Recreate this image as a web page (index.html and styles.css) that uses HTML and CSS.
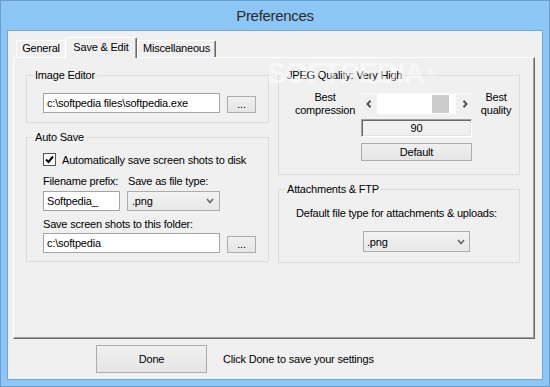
FILE: index.html
```html
<!DOCTYPE html>
<html lang="en">
<head>
    <meta charset="UTF-8">
    <title>Preferences</title>
    <link rel="stylesheet" href="styles.css">
</head>
<body>
    <div class="window">
        <div class="titlebar">Preferences</div>
        <div class="client">
            <div class="tabs">
                <div class="tab tab-general">General</div>
                <div class="tab tab-active">Save &amp; Edit</div>
                <div class="tab tab-misc">Miscellaneous</div>
            </div>
            <div class="panel">
                <div class="column column-left">
                    <div class="group group-editor">
                        <span class="group-title">Image Editor</span>
                        <div class="path-row">
                            <div class="textbox path">c:\softpedia files\softpedia.exe</div>
                            <button class="btn browse">...</button>
                        </div>
                    </div>
                    <div class="group group-autosave">
                        <span class="group-title">Auto Save</span>
                        <div class="check-row">
                            <span class="checkbox">
                                <svg width="11" height="11" viewBox="0 0 11 11"><polyline points="2,5.5 4.5,8 9,2.5" fill="none" stroke="#000" stroke-width="2"/></svg>
                            </span>
                            <span>Automatically save screen shots to disk</span>
                        </div>
                        <div class="field-labels">
                            <span class="label-prefix">Filename prefix:</span>
                            <span class="label-type">Save as file type:</span>
                        </div>
                        <div class="field-row">
                            <div class="textbox prefix">Softpedia_</div>
                            <div class="select type">
                                <span>.png</span>
                                <svg width="8" height="6" viewBox="0 0 8 6"><polyline points="1,1 4,4.5 7,1" fill="none" stroke="#666" stroke-width="1.6"/></svg>
                            </div>
                        </div>
                        <div class="folder-label">Save screen shots to this folder:</div>
                        <div class="path-row folder-row">
                            <div class="textbox path">c:\softpedia</div>
                            <button class="btn browse">...</button>
                        </div>
                    </div>
                </div>
                <div class="column column-right">
                    <div class="group group-jpeg">
                        <span class="group-title">JPEG Quality: Very High</span>
                        <div class="quality-row">
                            <div class="quality-label label-low">Best<br>compression</div>
                            <div class="quality-controls">
                                <div class="scroll">
                                    <span class="arrow">
                                        <svg width="6" height="8" viewBox="0 0 6 8"><polyline points="4.5,0.8 1.5,4 4.5,7.2" fill="none" stroke="#555" stroke-width="2"/></svg>
                                    </span>
                                    <span class="track"><span class="thumb"></span></span>
                                    <span class="arrow">
                                        <svg width="6" height="8" viewBox="0 0 6 8"><polyline points="1.5,0.8 4.5,4 1.5,7.2" fill="none" stroke="#555" stroke-width="2"/></svg>
                                    </span>
                                </div>
                                <div class="value">90</div>
                                <button class="btn default">Default</button>
                            </div>
                            <div class="quality-label label-high">Best<br>quality</div>
                        </div>
                    </div>
                    <div class="group group-ftp">
                        <span class="group-title">Attachments &amp; FTP</span>
                        <div class="ftp-label">Default file type for attachments &amp; uploads:</div>
                        <div class="select ftp-type">
                            <span>.png</span>
                            <svg width="8" height="6" viewBox="0 0 8 6"><polyline points="1,1 4,4.5 7,1" fill="none" stroke="#666" stroke-width="1.6"/></svg>
                        </div>
                    </div>
                </div>
            </div>
            <div class="footer">
                <button class="btn done">Done</button>
                <span class="hint">Click Done to save your settings</span>
            </div>
        </div>
        <div class="watermark">SOFTPEDIA<span class="reg">®</span></div>
    </div>
</body>
</html>
```

FILE: styles.css
```css
body {
    margin: 0;
    font-family: 'Liberation Sans', Arial, sans-serif;
    font-size: 11px;
    letter-spacing: -0.2px;
    color: #000;
    background-color: #8cc6f6;
}
.window {
    position: relative;
    width: 550px;
    height: 387px;
    box-sizing: border-box;
    border: 1px solid #6b9dcc;
    background-color: #8cc6f6; /* light blue frame */
    overflow: hidden;
}
.titlebar {
    height: 29px;
    line-height: 29px;
    text-align: center;
    font-size: 15px;
    letter-spacing: -0.3px;
    color: #2b2b2b;
}
.client {
    margin: 0 6px;
    height: 350px;
    box-sizing: border-box;
    border: 1px solid #73a5d6;
    background-color: #f0f0f0;
    padding: 6px 7px 0 5px;
}

/* tabs */
.tabs {
    display: flex;
    align-items: flex-end;
    height: 20px;
    margin-left: 3px;
}
.tab {
    box-sizing: border-box;
    height: 17px;
    line-height: 15px;
    text-align: center;
    border-top: 1px solid #fff;
    border-left: 1px solid #fff;
    border-right: 1px solid #696969;
    border-radius: 2px 2px 0 0;
    box-shadow: inset -1px 0 0 #a0a0a0;
    background-color: #f0f0f0;
}
.tab-general {
    width: 49px;
    border-right: none;
    box-shadow: none;
}
.tab-active {
    position: relative;
    width: 72px;
    height: 21px;
    line-height: 18px;
    margin-bottom: -1px;
    z-index: 1;
}
.tab-misc {
    width: 79px;
}

/* tab page */
.panel {
    display: flex;
    height: 282px;
    box-sizing: border-box;
    border-top: 1px solid #fff;
    border-left: 1px solid #fff;
    border-right: 1px solid #696969;
    border-bottom: 1px solid #696969;
    box-shadow: inset -1px -1px 0 #a0a0a0;
    padding: 17px 0 0 12px;
}
.column-left {
    width: 243px;
    margin-right: 9px;
}
.column-right {
    width: 242px;
}
.group {
    position: relative;
    border: 1px solid #dcdcdc;
}
.group + .group {
    margin-top: 14px;
}
.group-title {
    position: absolute;
    top: -8px;
    left: 6px;
    padding: 0 2px;
    line-height: 14px;
    background-color: #f0f0f0;
}

/* controls */
.textbox {
    box-sizing: border-box;
    height: 20px;
    line-height: 18px;
    padding-left: 3px;
    border: 1px solid #a5a5a5;
    background-color: #fff;
    white-space: nowrap;
}
.btn {
    box-sizing: border-box;
    margin: 0;
    padding: 0;
    font-family: inherit;
    font-size: 11px;
    letter-spacing: -0.2px;
    color: #000;
    border: 1px solid #acacac;
    background: linear-gradient(#f0f0f0, #e5e5e5);
}
.select {
    box-sizing: border-box;
    display: flex;
    align-items: center;
    justify-content: space-between;
    height: 20px;
    padding: 0 5px 0 4px;
    border: 1px solid #acacac;
    background: linear-gradient(#f2f2f2, #e8e8e8);
}
.path-row {
    display: flex;
    align-items: flex-end;
}
.path {
    width: 177px;
}
.browse {
    width: 29px;
    height: 17px;
    margin-left: 7px;
    line-height: 13px;
}

.group-editor {
    padding: 17px 0 9px 16px;
}
.group-autosave {
    padding: 15px 0 8px 16px;
}
.check-row {
    display: flex;
    align-items: center;
    height: 13px;
}
.checkbox {
    box-sizing: border-box;
    width: 13px;
    height: 13px;
    margin-right: 6px;
    border: 1px solid #555;
    background-color: #fff;
    display: flex;
}
.field-labels {
    display: flex;
    margin-top: 9px;
    line-height: 13px;
}
.label-prefix {
    width: 85px;
}
.field-row {
    display: flex;
    margin-top: 3px;
}
.prefix {
    width: 77px;
    margin-right: 7px;
}
.type {
    width: 93px;
}
.folder-label {
    margin-top: 7px;
    line-height: 13px;
}
.folder-row {
    margin-top: 2px;
}

/* jpeg quality */
.group-jpeg {
    padding: 15px 0 13px 11px;
}
.quality-row {
    display: flex;
}
.quality-label {
    line-height: 13px;
    text-align: center;
}
.label-low {
    width: 70px;
}
.label-high {
    width: 46px;
}
.quality-controls {
    width: 113px;
    margin-top: 2px;
}
.scroll {
    display: flex;
    height: 21px;
    background-color: #f0f0f0;
    border-top: 1px solid #f8f8f8;
    box-sizing: border-box;
}
.arrow {
    width: 17px;
    display: flex;
    align-items: center;
    justify-content: center;
}
.track {
    flex: 1;
    display: flex;
    padding: 1px 0 1px 55px;
    background-color: #fff;
}
.thumb {
    width: 17px;
    background-color: #cdcdcd;
}
.value {
    box-sizing: border-box;
    width: 111px;
    height: 18px;
    margin: 5px 0 0 1px;
    line-height: 16px;
    text-align: center;
    border: 1px solid;
    border-color: #a0a0a0 #fff #fff #a0a0a0;
    box-shadow: inset 1px 1px 0 #696969, inset -1px -1px 0 #e3e3e3;
    background-color: #f0f0f0;
}
.default {
    display: block;
    width: 111px;
    height: 18px;
    margin: 6px 0 0 1px;
}

/* attachments */
.group-ftp {
    padding: 17px 0 10px 17px;
}
.ftp-label {
    line-height: 13px;
}
.ftp-type {
    width: 107px;
    height: 21px;
    margin: 11px 0 0 67px;
    padding: 0 4px 0 3px;
}

/* bottom bar */
.footer {
    display: flex;
    align-items: center;
    height: 40px;
    padding-left: 83px;
}
.done {
    width: 111px;
    height: 28px;
}
.hint {
    margin-left: 16px;
}

.watermark {
    position: absolute;
    left: 266px;
    top: 58px;
    font-size: 29px;
    line-height: 29px;
    font-weight: bold;
    letter-spacing: -1px;
    color: rgba(255, 255, 255, 0.5);
    pointer-events: none;
}
.reg {
    font-size: 10px;
    vertical-align: top;
    margin-left: 3px;
}
```
